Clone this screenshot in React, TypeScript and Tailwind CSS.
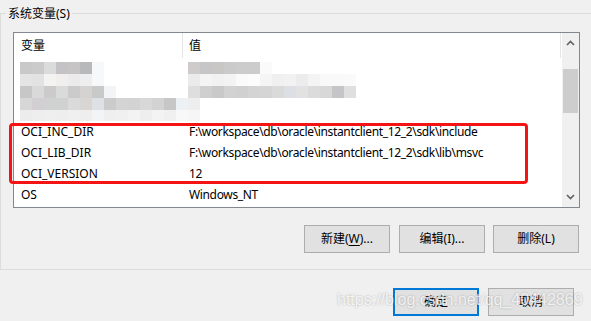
const mosaic: (string | null)[][] = [
  ["bg-[#c9c9c9]", "bg-[#cbcbcb]", "bg-[#dadcdb]", "bg-[#c4c2c5]", "bg-[#c6c4c5]", "bg-[#b8b9bb]", "bg-[#f6f8fa]", null, null, null, null, null, null, null, "bg-[#cecbca]", "bg-[#c6c6c8]", "bg-[#c9c7c6]", "bg-[#cacaca]", "bg-[#cccccc]", "bg-[#cccccc]", "bg-[#fafafa]"],
  ["bg-[#e4e4e4]", "bg-[#e2e2e2]", "bg-[#f3f3f1]", "bg-[#f0efee]", "bg-[#ebebeb]", "bg-[#eeeeee]", "bg-[#f6f8f9]", null, null, null, null, null, null, null, "bg-[#ebebeb]", "bg-[#f4f4f4]", "bg-[#f1f1f1]", "bg-[#f3f3f3]", "bg-[#fafafa]", "bg-[#fcfcfc]", "bg-[#f5f5f5]", "bg-[#f0f0f0]", "bg-[#f2f2f2]", "bg-[#ececec]", "bg-[#f4f4f4]", "bg-[#f9f9f9]", "bg-[#f9f9f9]", "bg-[#fafafa]"],
  ["bg-[#c7c7c7]", "bg-[#d9d9d9]", "bg-[#cdcacb]", "bg-[#d9dbda]", "bg-[#cbcbcb]", "bg-[#d4d3d1]", "bg-[#c8cac9]", "bg-[#f2f4f6]", null, null, null, null, null, null, "bg-[#dedede]", "bg-[#cfcfcf]", "bg-[#c9c9c9]", "bg-[#d2d2d2]", "bg-[#d0d0d0]", "bg-[#d4d4d4]", "bg-[#d5d5d5]", "bg-[#dadada]", "bg-[#dcdfe3]", "bg-[#e2e2e2]", "bg-[#dbdbdb]", "bg-[#d8d8d8]", "bg-[#c5c5c7]", "bg-[#dfdfdf]"],
  ["bg-[#d7d7d7]", "bg-[#d2cfd2]", "bg-[#d0d2d1]", "bg-[#d0d1d1]", "bg-[#dadada]", "bg-[#d9d5d3]", "bg-[#dde1e5]", "bg-[#cbcbcb]", "bg-[#d4d4d4]", "bg-[#d3d3d3]", "bg-[#d8d8d8]", "bg-[#d3d3d3]", "bg-[#c7c7c7]", "bg-[#edf0f4]", "bg-[#eeeeee]"],
  ["bg-[#ececec]", "bg-[#eeeeee]", "bg-[#efefef]", "bg-[#eeeeee]", "bg-[#f0f0f0]", "bg-[#eeeeee]", "bg-[#f2f4f6]", "bg-[#efefef]", "bg-[#f0f0f0]", "bg-[#f3f3f3]", "bg-[#eeeeee]", "bg-[#f3f3f3]", "bg-[#f0f0f0]", "bg-[#f8f8f8]", "bg-[#f6f6f6]"],
];

const rows = [
  ["OCI_INC_DIR", "F:\\workspace\\db\\oracle\\instantclient_12_2\\sdk\\include"],
  ["OCI_LIB_DIR", "F:\\workspace\\db\\oracle\\instantclient_12_2\\sdk\\lib\\msvc"],
  ["OCI_VERSION", "12"],
  ["OS", "Windows_NT"],
];

function Chevron({ up }: { up?: boolean }) {
  return (
    <svg width="9" height="6" viewBox="0 0 9 6">
      <polyline
        points={up ? "1,5 4.5,1.5 8,5" : "1,1 4.5,4.5 8,1"}
        fill="none"
        stroke="#606060"
        strokeWidth="1.6"
      />
    </svg>
  );
}

function Btn({ children, primary }: { children: React.ReactNode; primary?: boolean }) {
  return (
    <div
      className={
        primary
          ? "w-[86px] h-[28px] flex items-center justify-center bg-[#e1e1e1] border-2 border-[#0078d7]"
          : "w-[86px] h-[28px] flex items-center justify-center bg-[#e1e1e1] border border-[#adadad]"
      }
    >
      {children}
    </div>
  );
}

export default function App() {
  return (
    <div className="relative w-[591px] h-[321px] overflow-hidden bg-[#f0f0f0] text-[12px] text-black font-['Noto_Sans','Noto_Sans_CJK_SC',sans-serif]">
      <div className="pt-[13px]">
        {/* group box */}
        <div className="relative w-[620px] h-[257px] border border-[#dcdcdc]">
          <div className="absolute -top-[8px] left-[5px] px-[2px] bg-[#f0f0f0] leading-[16px]">
            系统变量(S)
          </div>

          {/* list view */}
          <div className="ml-[12px] mt-[18px] w-[567px] h-[176px] border border-[#828790] bg-white flex overflow-hidden">
            <div className="w-[548px] flex flex-col">
              <div className="h-[25px] flex items-center shrink-0">
                <div className="w-[169px] h-full pl-[7px] flex items-center border-r border-[#e5e5e5]">变量</div>
                <div className="flex-1 h-full pl-[6px] flex items-center border-r border-[#e5e5e5]">值</div>
                <div className="w-[1px]" />
              </div>
              <div className="h-[63px] pt-[4px] pl-[6px] overflow-hidden shrink-0">
                {mosaic.map((r, i) => (
                  <div key={i} className="flex h-[12px]">
                    {r.map((c, j) => (
                      <div key={j} className={"w-[12px] h-[12px] " + (c ?? "")} />
                    ))}
                  </div>
                ))}
              </div>
              {rows.map(([k, v]) => (
                <div key={k} className="h-[21px] flex items-center shrink-0">
                  <div className="w-[169px] pl-[7px]">{k}</div>
                  <div className="pl-[6px] whitespace-nowrap tracking-[-0.35px]">{v}</div>
                </div>
              ))}
            </div>
            {/* scrollbar */}
            <div className="w-[17px] bg-[#f0f0f0] flex flex-col">
              <div className="h-[20px] flex items-center justify-center">
                <Chevron up />
              </div>
              <div className="mt-[16px] mx-[1px] h-[44px] bg-[#cdcdcd]" />
              <div className="flex-1" />
              <div className="h-[20px] flex items-center justify-center">
                <Chevron />
              </div>
            </div>
          </div>

          {/* action buttons */}
          <div className="flex mt-[17px] ml-[303px]">
            <Btn>
              新建(<span className="underline underline-offset-2">W</span>)...
            </Btn>
            <div className="w-[9px]" />
            <Btn>编辑(I)...</Btn>
            <div className="w-[8px]" />
            <Btn>删除(L)</Btn>
          </div>
        </div>

        {/* dialog buttons */}
        <div className="flex mt-[18px] ml-[393px] gap-[9px]">
          <Btn primary>确定</Btn>
          <Btn>取消</Btn>
        </div>
      </div>

      {/* red annotation box */}
      <div className="absolute left-[9px] top-[123px] w-[519px] h-[61px] border-[3px] border-[#f51414] rounded-[4px]" />

      {/* watermark */}
      <div className="absolute left-[337px] top-[289px] text-[16px] leading-[22px] text-white/80 font-['Liberation_Sans',sans-serif] [text-shadow:0_0_2px_rgba(0,0,0,0.3)] whitespace-nowrap">
        https://blog.csdn.net/qq_40442869
      </div>
    </div>
  );
}
